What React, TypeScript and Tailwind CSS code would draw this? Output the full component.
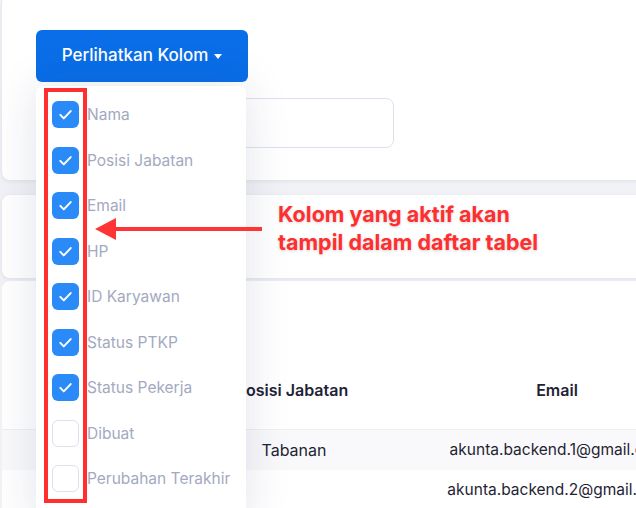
import React from 'react'

const columns = [
    { label: 'Nama', checked: true },
    { label: 'Posisi Jabatan', checked: true },
    { label: 'Email', checked: true },
    { label: 'HP', checked: true },
    { label: 'ID Karyawan', checked: true },
    { label: 'Status PTKP', checked: true },
    { label: 'Status Pekerja', checked: true },
    { label: 'Dibuat', checked: false },
    { label: 'Perubahan Terakhir', checked: false },
]

const rows = [
    { posisi: 'Tabanan', email: 'akunta.backend.1@gmail.com' },
    { posisi: '', email: 'akunta.backend.2@gmail.com' },
]

function Check() {
    return (
        <svg width="27" height="27" viewBox="0 0 27 27" fill="none">
            <path d="M8.3 13.9l3.5 3.5 6.9-7.3" stroke="white" strokeWidth="2" strokeLinecap="round" strokeLinejoin="round" />
        </svg>
    )
}

export default function App() {
    return (
        <div className="relative w-[636px] h-[508px] overflow-hidden bg-[#f1f2f6] font-['Inter',sans-serif]">
            <div className="ml-[2px] w-[740px] flex flex-col">
                {/* filter card */}
                <div className="mt-[-4px] h-[184px] bg-white rounded-lg shadow-[0_1px_4px_rgba(20,30,60,0.08)] pl-[34px] pt-[34px]">
                    <button className="w-[212px] h-[52px] rounded-md bg-[#0a6ee8] text-white text-[17px] font-medium flex items-center justify-center gap-[6px]">
                        Perlihatkan Kolom
                        <span className="w-0 h-0 border-l-[4px] border-r-[4px] border-t-[5px] border-l-transparent border-r-transparent border-t-white" />
                    </button>
                    <div className="mt-[16px] w-[358px] h-[50px] rounded-lg border border-[#dde1ee]" />
                </div>

                {/* info card */}
                <div className="mt-[15px] h-[83px] bg-white rounded-lg shadow-[0_1px_4px_rgba(20,30,60,0.08)]" />

                {/* table card */}
                <div className="mt-[3px] h-[240px] bg-white rounded-lg pt-[69px] text-[16px] text-[#1f2433]">
                    <div className="grid grid-cols-[210px_160px_370px] h-[80px] items-center text-center font-semibold text-[#1e2235] border-b border-[#eef0f4]">
                        <div />
                        <div className="whitespace-nowrap">Posisi Jabatan</div>
                        <div>Email</div>
                    </div>
                    {rows.map((r, i) => (
                        <div
                            key={i}
                            className={`grid grid-cols-[210px_160px_370px] h-[40px] items-center text-center ${i === 0 ? 'bg-[#f9f9fb]' : 'bg-white'}`}
                        >
                            <div />
                            <div className="pl-[4px]">{r.posisi}</div>
                            <div className="whitespace-nowrap text-[15.5px] pl-[2px]">{r.email}</div>
                        </div>
                    ))}
                </div>
            </div>

            {/* dropdown */}
            <div className="absolute left-[36px] top-[86px] w-[210px] h-[440px] bg-white rounded-md shadow-[0_0_45px_rgba(30,40,90,0.13)] pt-[6px]">
                {columns.map((c) => (
                    <div key={c.label} className="h-[45.5px] flex items-center pl-[16px] gap-[8px]">
                        {c.checked ? (
                            <div className="w-[27px] h-[27px] rounded-md bg-[#2a8af7] flex items-center justify-center">
                                <Check />
                            </div>
                        ) : (
                            <div className="w-[27px] h-[27px] rounded-md bg-white border border-[#dde1ee]" />
                        )}
                        <span className="text-[15.5px] text-[#a3a9bf]">{c.label}</span>
                    </div>
                ))}
            </div>

            {/* annotation */}
            <div className="absolute left-[44px] top-[88px] w-[43px] h-[415px] border-4 border-[#ff2f2f]" />
            <svg className="absolute left-[90px] top-[214px]" width="180" height="30" viewBox="0 0 180 30">
                <line x1="22" y1="15" x2="172" y2="15" stroke="#ff3535" strokeWidth="4" />
                <polygon points="5,15 26,4 26,26" fill="#ff3535" />
            </svg>
            <div className="absolute left-[278px] top-[200px] text-[21.5px] leading-[28px] font-bold text-[#ff2f2f] [text-shadow:0_1px_3px_rgba(0,0,0,0.18)]">
                <div>Kolom yang aktif akan</div>
                <div>tampil dalam daftar tabel</div>
            </div>
        </div>
    )
}
